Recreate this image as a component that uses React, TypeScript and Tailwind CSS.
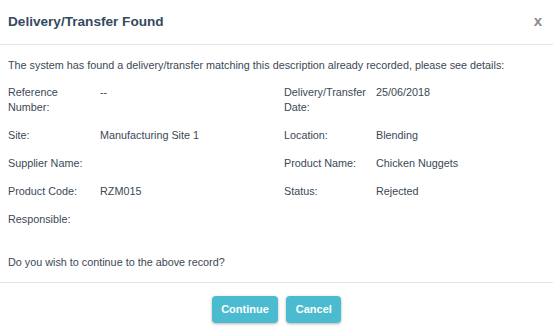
import React from 'react'

type Field = { label: string; value?: string }

const rows: [Field, Field | null][] = [
  [{ label: 'Reference Number:', value: '--' }, { label: 'Delivery/Transfer Date:', value: '25/06/2018' }],
  [{ label: 'Site:', value: 'Manufacturing Site 1' }, { label: 'Location:', value: 'Blending' }],
  [{ label: 'Supplier Name:' }, { label: 'Product Name:', value: 'Chicken Nuggets' }],
  [{ label: 'Product Code:', value: 'RZM015' }, { label: 'Status:', value: 'Rejected' }],
  [{ label: 'Responsible:' }, null],
]

function Cell({ field }: { field: Field | null }) {
  if (!field) return <div />
  return (
    <div className="flex">
      <div className="w-[92px] shrink-0 pr-1">{field.label}</div>
      <div>{field.value}</div>
    </div>
  )
}

export default function App() {
  return (
    <div
      className="w-[553px] h-[328px] bg-white text-[10.8px] leading-[15px] text-[#3b4855] overflow-hidden"
      style={{ fontFamily: '"Liberation Sans", Arial, sans-serif' }}
    >
      <div className="h-[45px] flex items-center justify-between pl-2 pr-[8px] border-b border-[#e5e5e5]">
        <h4 className="text-[13.6px] font-bold text-[#34495e] -mt-[1px]">Delivery/Transfer Found</h4>
        <button className="text-[15px] font-bold text-[#8a8a8a] -mt-[4px] mr-[3px]">x</button>
      </div>

      <div className="px-2 pt-[13px] pb-[12px] border-b border-[#e5e5e5]">
        <p>The system has found a delivery/transfer matching this description already recorded, please see details:</p>
        <div className="mt-[12px] flex flex-col gap-y-[13px]">
          {rows.map(([left, right], i) => (
            <div key={i} className="grid grid-cols-[276px_1fr]">
              <Cell field={left} />
              <Cell field={right} />
            </div>
          ))}
        </div>
        <p className="mt-[28px]">Do you wish to continue to the above record?</p>
      </div>

      <div className="flex justify-center gap-[8px] pt-[13px]">
        <button className="h-[27px] px-[9.5px] rounded-[4px] bg-[#4bbccf] text-white font-bold text-[11px] shadow-[0_1px_3px_rgba(0,0,0,0.3)]">
          Continue
        </button>
        <button className="h-[27px] px-[9.5px] rounded-[4px] bg-[#4bbccf] text-white font-bold text-[11px] shadow-[0_1px_3px_rgba(0,0,0,0.3)]">
          Cancel
        </button>
      </div>
    </div>
  )
}
